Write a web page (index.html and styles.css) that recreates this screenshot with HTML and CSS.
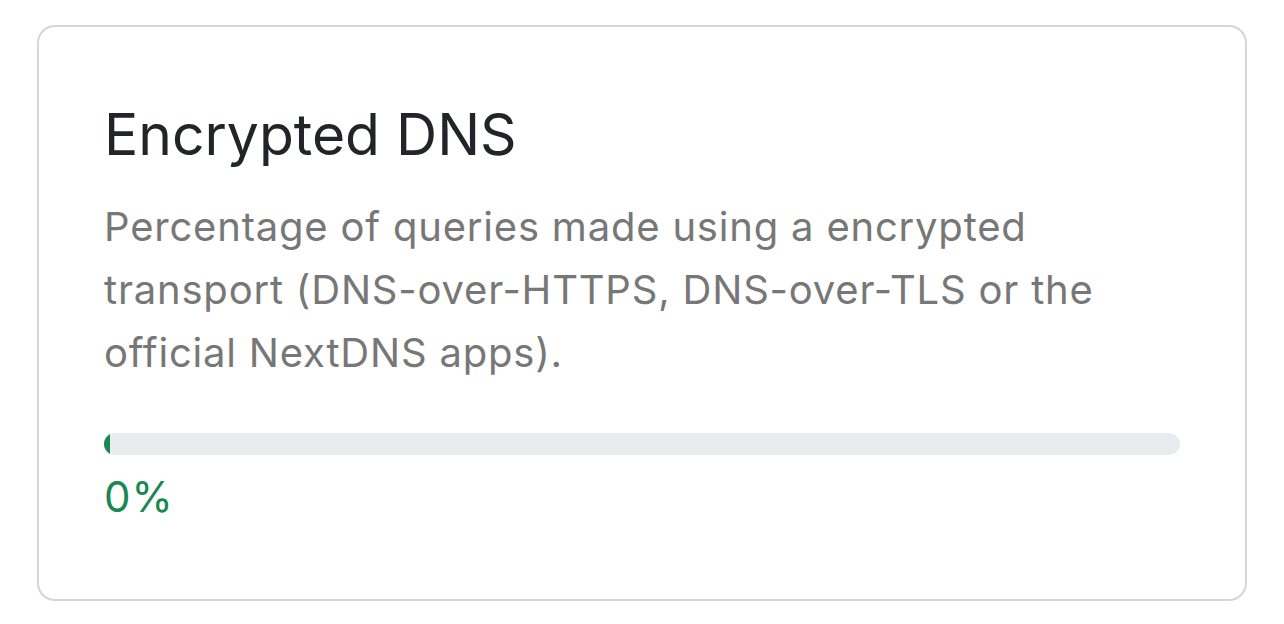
FILE: index.html
```html
<!DOCTYPE html>
<html lang="en">
<head>
<meta charset="utf-8">
<title>Encrypted DNS</title>
<link rel="stylesheet" href="styles.css">
</head>
<body>
<div class="page">
  <section class="card">
    <h2 class="card-title">Encrypted DNS</h2>
    <p class="card-text">Percentage of queries made using a encrypted transport (DNS-over-HTTPS, DNS-over-TLS or the official NextDNS apps).</p>
    <div class="progress"><div class="progress-fill"></div></div>
    <div class="percent">0%</div>
  </section>
</div>
</body>
</html>
```

FILE: styles.css
```css
html, body {
  margin: 0;
  padding: 0;
  background: #ffffff;
}
body {
  font-family: Inter, "Liberation Sans", sans-serif;
}
.page {
  padding: 25px 37px 23px 37px;
}
.card {
  box-sizing: border-box;
  height: 576px;
  border: 2px solid #d6d6d6;
  border-radius: 18px;
  padding: 0 65px 0 65px;
  display: flex;
  flex-direction: column;
}
.card-title {
  margin: 79px 0 0 0;
  font-size: 57px;
  font-weight: 400;
  line-height: 1;
  color: #212529;
}
.card-text {
  margin: 32px 0 0 0;
  font-size: 40px;
  letter-spacing: 0.8px;
  line-height: 63px;
  color: #777777;
}
.progress {
  margin-top: 49px;
  height: 22px;
  border-radius: 11px;
  background: #e9ecef;
  overflow: hidden;
}
.progress-fill {
  width: 6px;
  height: 100%;
  background: #198754;
}
.percent {
  margin-top: 21px;
  font-size: 42px;
  letter-spacing: 1px;
  line-height: 1;
  color: #198754;
}
```
